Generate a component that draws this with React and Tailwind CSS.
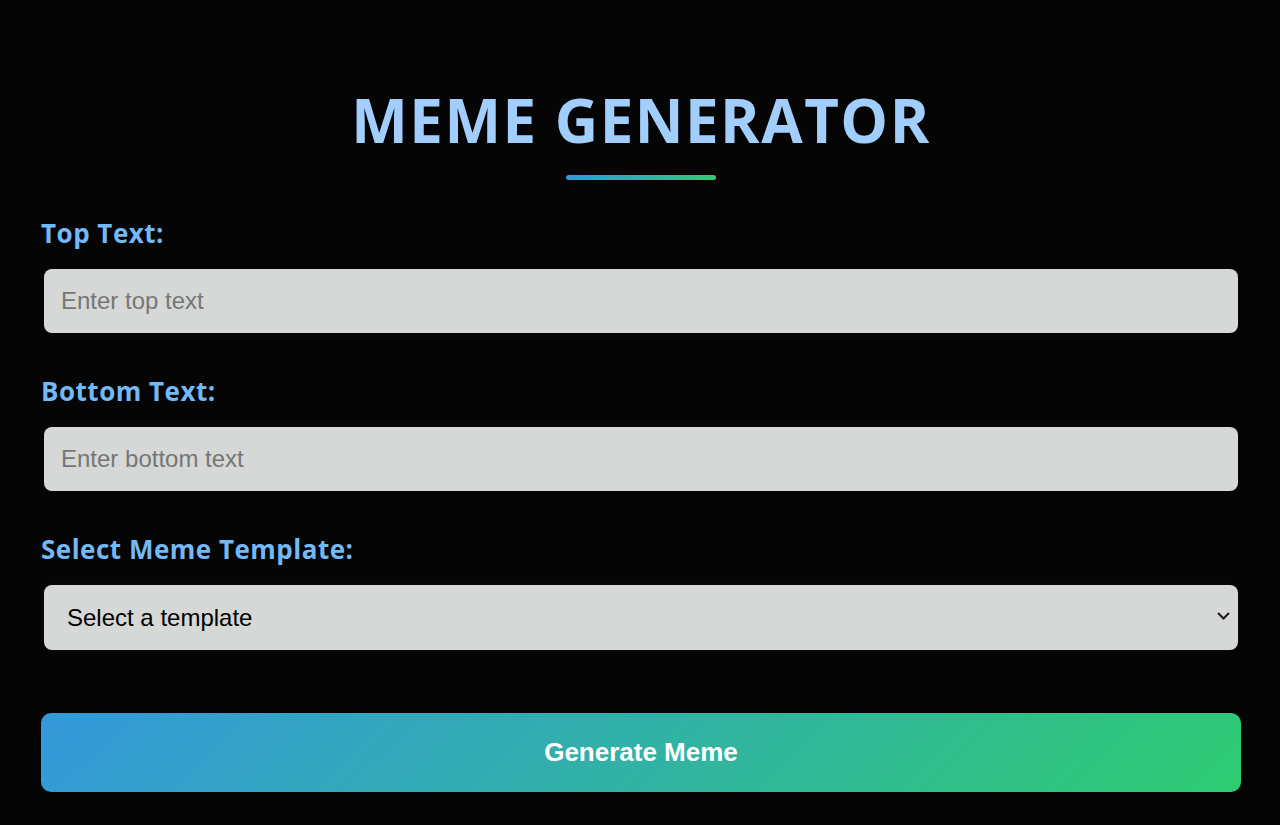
import React from "react";

export default function App() {
  return (
    <div className="min-h-[825px] w-full bg-[#050505] flex justify-center pl-[2px]">
      <div className="w-[1200px] flex flex-col pt-[84px]">
        <h1 className="text-center text-[60px] leading-[72px] font-bold tracking-[1.5px] text-[#a1cefc] font-['Open_Sans',sans-serif]">
          MEME GENERATOR
        </h1>
        <div className="mx-auto mt-[19px] h-[5px] w-[150px] rounded-full bg-gradient-to-r from-[#3498db] to-[#2ecc71]" />

        <label className="mt-[35px] text-[26px] leading-[36px] font-bold tracking-[0.5px] text-[#74b9f7] font-['Open_Sans',sans-serif]">
          Top Text:
        </label>
        <input
          type="text"
          placeholder="Enter top text"
          className="mt-[18px] mx-[3px] h-[64px] rounded-[8px] bg-[#d6d8d7] pl-[17px] text-[24px] text-black placeholder:text-[#767676] outline-none font-['Liberation_Sans',Arial,sans-serif]"
        />

        <label className="mt-[40px] text-[26px] leading-[36px] font-bold tracking-[0.5px] text-[#74b9f7] font-['Open_Sans',sans-serif]">
          Bottom Text:
        </label>
        <input
          type="text"
          placeholder="Enter bottom text"
          className="mt-[18px] mx-[3px] h-[64px] rounded-[8px] bg-[#d6d8d7] pl-[17px] text-[24px] text-black placeholder:text-[#767676] outline-none font-['Liberation_Sans',Arial,sans-serif]"
        />

        <label className="mt-[40px] text-[26px] leading-[36px] font-bold tracking-[0.5px] text-[#74b9f7] font-['Open_Sans',sans-serif]">
          Select Meme Template:
        </label>
        <div className="relative mt-[18px] mx-[3px] h-[65px] rounded-[8px] shadow-[0_0_6px_rgba(255,255,255,0.04)]">
          <select className="h-full w-full appearance-none rounded-[8px] bg-[#d6d8d7] pl-[23px] text-[24px] text-black outline-none font-['Liberation_Sans',Arial,sans-serif]">
            <option>Select a template</option>
          </select>
          <svg
            className="pointer-events-none absolute right-[8px] top-[27px]"
            width="13"
            height="8"
            viewBox="0 0 13 8"
            fill="none"
          >
            <path d="M1 1l5.5 5.5L12 1" stroke="#1a1a1a" strokeWidth="2" />
          </svg>
        </div>

        <button className="mt-[63px] h-[79px] w-full rounded-[10px] bg-[linear-gradient(135deg,#3498db,#2ecc71)] text-[26px] font-bold text-white font-['Liberation_Sans',Arial,sans-serif]">
          Generate Meme
        </button>
      </div>
    </div>
  );
}
